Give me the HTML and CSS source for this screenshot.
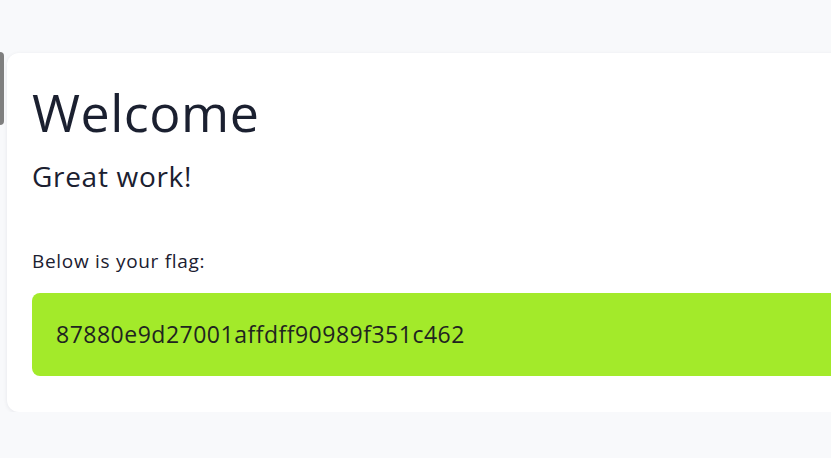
FILE: index.html
```html
<!DOCTYPE html>
<html>
<head>
<meta charset="utf-8">
<link rel="stylesheet" href="styles.css">
</head>
<body>
<div class="tab"></div>
<main class="page">
  <section class="card">
    <h1 class="title">Welcome</h1>
    <p class="subtitle">Great work!</p>
    <p class="label">Below is your flag:</p>
    <div class="flag">87880e9d27001affdff90989f351c462</div>
  </section>
</main>
</body>
</html>
```
FILE: styles.css
```css
html, body {
  margin: 0;
  padding: 0;
  background: #f8f9fb;
  font-family: "Open Sans", "Noto Sans", sans-serif;
  color: #1b2030;
  overflow: hidden;
}
.tab {
  position: absolute;
  left: 0;
  top: 52px;
  width: 4px;
  height: 73px;
  background: #7f7f7f;
  border-radius: 0 4px 4px 0;
}
.page {
  padding: 53px 0 0 7px;
}
.card {
  background: #ffffff;
  border-radius: 12px;
  margin-right: -40px;
  padding: 28px 25px 36px 25px;
  box-shadow: 0 1px 4px rgba(20, 30, 50, 0.08);
}
.title {
  margin: 0;
  font-size: 52px;
  font-weight: 400;
  line-height: 62px;
  letter-spacing: 0.5px;
}
.subtitle {
  margin: 15px 0 0 0;
  font-size: 28px;
  line-height: 36px;
  letter-spacing: 0.7px;
}
.label {
  margin: 55px 0 0 0;
  font-size: 19px;
  line-height: 24px;
  letter-spacing: 0.7px;
}
.flag {
  margin-top: 20px;
  background: #a3ea2a;
  border-radius: 8px;
  padding: 24px;
  font-size: 23px;
  line-height: 35px;
  letter-spacing: 0.5px;
  color: #1f2420;
}
```
